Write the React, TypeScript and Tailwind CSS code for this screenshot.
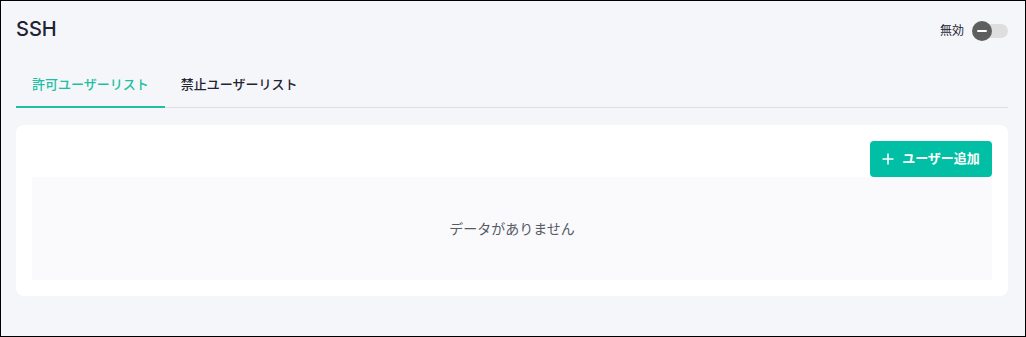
import React, { useState } from "react";

const font = { fontFamily: '"Inter", "Noto Sans CJK JP", sans-serif' };

const tabs = ["許可ユーザーリスト", "禁止ユーザーリスト"];

const App = () => {
  const [active, setActive] = useState(0);
  const [enabled, setEnabled] = useState(false);

  return (
    <div
      className="w-[1026px] h-[337px] border border-black bg-[#f5f6fa] pl-[15px] pr-[17px] text-[#1f2430]"
      style={font}
    >
      {/* header */}
      <div className="flex items-center justify-between h-[40px] mt-[8px]">
        <h1 className="text-[20px] font-medium leading-none">SSH</h1>
        <div className="flex items-center gap-[9px] mt-[4px]">
          <span className="text-[12px]">{enabled ? "有効" : "無効"}</span>
          <button
            className="relative w-[35px] h-[14px] rounded-full bg-[#dedede]"
            onClick={() => setEnabled(!enabled)}
          >
            <span className="absolute left-[-1px] top-[-3px] w-[20px] h-[20px] rounded-full bg-[#5e5e5e] flex items-center justify-center">
              <span className="w-[10px] h-[2px] bg-white rounded-full" />
            </span>
          </button>
        </div>
      </div>

      {/* tabs */}
      <div className="flex border-b border-[#dcdfe6] mt-[14px]">
        {tabs.map((t, i) => (
          <button
            key={t}
            onClick={() => setActive(i)}
            className={
              i === active
                ? "h-[45px] px-[16px] text-[13px] font-medium text-[#1ebfa3] border-b-2 border-[#1ebfa3] mb-[-1px]"
                : "h-[45px] px-[16px] text-[13px] font-medium text-[#1f2430] border-b-2 border-transparent mb-[-1px]"
            }
          >
            {t}
          </button>
        ))}
      </div>

      {/* list card */}
      <div className="mt-[17px] bg-white rounded-[8px] p-[16px]">
        <div className="flex justify-end">
          <button className="h-[36px] w-[122px] rounded-[4px] bg-[#00bfa5] text-white text-[13px] font-bold flex items-center justify-center gap-[8px]">
            <svg width="12" height="12" viewBox="0 0 12 12" fill="none" stroke="white" strokeWidth="1.6">
              <path d="M6 0.5v11M0.5 6h11" />
            </svg>
            ユーザー追加
          </button>
        </div>
        <div className="h-[103px] bg-[#fafafd] flex items-center justify-center text-[14px] text-[#555a63]">
          データがありません
        </div>
      </div>
    </div>
  );
};

export default App;
